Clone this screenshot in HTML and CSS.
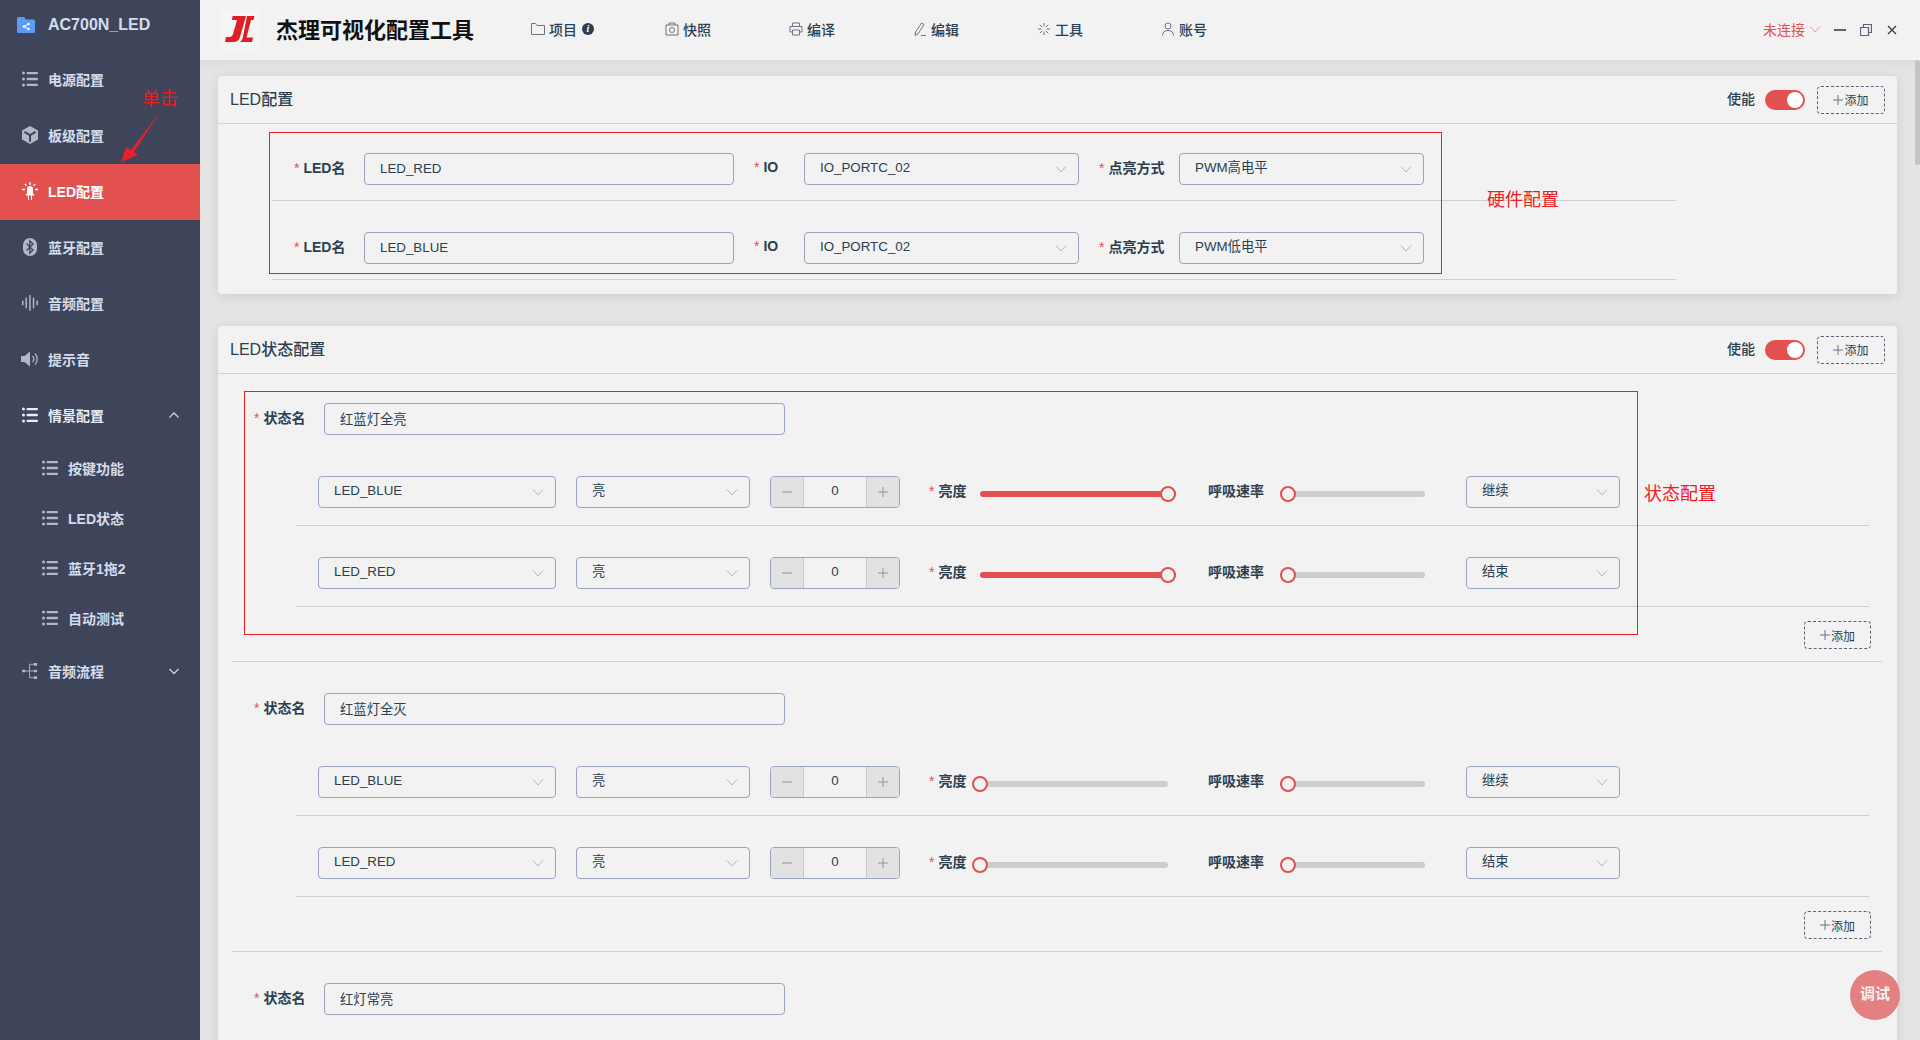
FILE: index.html
```html
<!DOCTYPE html>
<html>
<head>
  <meta charset="utf-8">
  <title>杰理可视化配置工具</title>
  <link rel="stylesheet" href="styles.css">
</head>
<body>
  <svg class="icon-defs" width="0" height="0">
    <symbol id="i-list" viewBox="0 0 16 16">
      <circle cx="1.500" cy="2" r="1.500"/><circle cx="1.500" cy="8" r="1.500"/><circle cx="1.500" cy="14" r="1.500"/>
      <rect x="4.500" y="0.900" width="11.500" height="2.400" rx="1"/><rect x="4.500" y="6.800" width="11.500" height="2.400" rx="1"/><rect x="4.500" y="12.700" width="11.500" height="2.400" rx="1"/>
    </symbol>
    <symbol id="i-down" viewBox="0 0 12 12">
      <path d="M1 3.500 6 9 11 3.500" fill="none" stroke="currentColor" stroke-width="1"/>
    </symbol>
    <symbol id="i-plus" viewBox="0 0 10 10">
      <path d="M0 5h10M5 0v10" stroke="currentColor" stroke-width="1"/>
    </symbol>
    <symbol id="i-minus" viewBox="0 0 10 10">
      <path d="M0 5h10" stroke="currentColor" stroke-width="1"/>
    </symbol>
  </svg>

  <div class="app">
    <aside class="sidebar">
      <div class="side-title">
        <svg class="folder" viewBox="0 0 18 16"><path d="M0 1.500A1.500 1.500 0 0 1 1.500 0H7l2 2.500h7.500A1.500 1.500 0 0 1 18 4v10.500A1.500 1.500 0 0 1 16.500 16h-15A1.500 1.500 0 0 1 0 14.500z" fill="#5a9cf8"/><g fill="#fff"><circle cx="11.500" cy="7" r="1.300"/><circle cx="7" cy="9.500" r="1.300"/><circle cx="11.500" cy="12" r="1.300"/></g><path d="M11.500 7 7 9.500l4.500 2.500" stroke="#fff" fill="none"/></svg>
        <span>AC700N_LED</span>
      </div>
      <div class="side-item"><svg class="side-icon"><use href="#i-list"/></svg>电源配置</div>
      <div class="side-item">
        <svg class="side-icon tall" viewBox="0 0 16 18"><path d="M8 0 16 4.500v9L8 18 0 13.500v-9zM8 8 3 5 2 6.800l5 2.900v6h2v-6l5-2.900L13 5z" fill-rule="evenodd"/></svg>板级配置
      </div>
      <div class="side-item active">
        <svg class="side-icon tall" viewBox="0 0 16 18"><path d="M5 7a3 3 0 0 1 6 0v5h1.200v1.500H10V18H9v-4.500H7V18H6v-4.500H3.800V12H5z"/><path d="M8 0v3M2.800 1.800l1.700 2M13.200 1.800l-1.700 2M0 7.500h3M13 7.500h3" stroke="#fff" stroke-width="1.300"/></svg>LED配置
      </div>
      <div class="side-item">
        <svg class="side-icon tall" viewBox="0 0 16 18"><rect x="1" width="14" height="18" rx="7"/><path d="M4.500 5.500 11 12l-3.200 3.200V2.800L11 6l-6.500 6.500" fill="none" stroke="#3e445a" stroke-width="1.300"/></svg>蓝牙配置
      </div>
      <div class="side-item">
        <svg class="side-icon" viewBox="0 0 16 16"><rect x="0" y="5.500" width="1.500" height="5" rx=".7"/><rect x="3.500" y="2.500" width="1.500" height="11" rx=".7"/><rect x="7.200" y="0" width="1.500" height="16" rx=".7"/><rect x="10.800" y="2.500" width="1.500" height="11" rx=".7"/><rect x="14.400" y="5.500" width="1.500" height="5" rx=".7"/></svg>音频配置
      </div>
      <div class="side-item">
        <svg class="side-icon wide" viewBox="0 0 18 16"><path d="M0 5h3.500L9 .5v15L3.500 11H0z"/><path d="M11.500 5a4 4 0 0 1 0 6M14 2.500a8 8 0 0 1 0 11" fill="none" stroke="currentColor" stroke-width="1.300"/></svg>提示音
      </div>
      <div class="side-item open">
        <svg class="side-icon"><use href="#i-list"/></svg>情景配置
        <svg class="side-arrow" viewBox="0 0 12 12"><path d="M1.500 8.500 6 4l4.500 4.500" fill="none" stroke="currentColor" stroke-width="1.300"/></svg>
      </div>
      <div class="side-sub"><svg class="side-icon"><use href="#i-list"/></svg>按键功能</div>
      <div class="side-sub"><svg class="side-icon"><use href="#i-list"/></svg>LED状态</div>
      <div class="side-sub"><svg class="side-icon"><use href="#i-list"/></svg>蓝牙1拖2</div>
      <div class="side-sub"><svg class="side-icon"><use href="#i-list"/></svg>自动测试</div>
      <div class="side-item">
        <svg class="side-icon wide" viewBox="0 0 18 18"><rect x="0" y="7.500" width="4" height="3" rx=".8"/><rect x="13" y="0" width="4" height="3" rx=".8"/><rect x="13" y="7.500" width="4" height="3" rx=".8"/><rect x="13" y="15" width="4" height="3" rx=".8"/><path d="M4 9h9M8.500 1.500V16.500M8.500 1.500H13M8.500 16.500H13" stroke="currentColor" fill="none"/></svg>音频流程
        <svg class="side-arrow" viewBox="0 0 12 12"><path d="M1.500 4 6 8.500 10.500 4" fill="none" stroke="currentColor" stroke-width="1.300"/></svg>
      </div>
    </aside>

    <div class="main">
      <header class="topbar">
        <div class="logo">
          <svg viewBox="0 0 40 40"><path d="M12.500 6H26L20 27c-1 3.300-3 5-7 5H5l1-5h3.500c2 0 3-1 3.500-3l4-14h-5z" fill="#df1f26"/><path d="M27 6h7.500l-1 4H31L26.500 27.500H33L32 32H19.500c2-1 2.800-2.500 3.300-4.500z" fill="#df1f26"/></svg>
        </div>
        <h1 class="app-title">杰理可视化配置工具</h1>
        <nav class="nav">
          <div class="nav-item first">
            <svg class="nav-icon" viewBox="0 0 14 14"><path d="M.5 12.500V1.500h4l1.500 2h7.500v9z"/></svg>项目
            <span class="info">i</span>
          </div>
          <div class="nav-item">
            <svg class="nav-icon" viewBox="0 0 14 14"><path d="M1 3h12v10H1zM4 3V1h6v2"/><circle cx="7" cy="8" r="2.500"/></svg>快照
          </div>
          <div class="nav-item">
            <svg class="nav-icon" viewBox="0 0 14 14"><path d="M3.500 4V1h7v3M3 10H1V4.500h12V10h-2M3.500 8h7v5h-7z"/></svg>编译
          </div>
          <div class="nav-item">
            <svg class="nav-icon" viewBox="0 0 14 14"><path d="M8.500 1 11 2.500 5 12 2 13.500 2.500 10zM8 13.500h5"/></svg>编辑
          </div>
          <div class="nav-item">
            <svg class="nav-icon" viewBox="0 0 14 14"><path d="M7 1v3.500M7 9.500V13M1 7h3.500M9.500 7H13M2.800 2.800l2.400 2.400M8.800 8.800l2.400 2.400M11.200 2.800 8.800 5.200M5.200 8.800l-2.400 2.400"/></svg>工具
          </div>
          <div class="nav-item">
            <svg class="nav-icon" viewBox="0 0 14 14"><circle cx="7" cy="4" r="3"/><path d="M1.500 13.500c0-3 2-5 5.500-5s5.500 2 5.500 5"/></svg>账号
          </div>
        </nav>
        <div class="status">未连接<svg class="chev"><use href="#i-down"/></svg></div>
        <div class="win-btns">
          <svg viewBox="0 0 12 12"><path d="M0 6h12" stroke="#5a6478" stroke-width="2"/></svg>
          <svg viewBox="0 0 12 12"><path d="M.5 3.500h8v8h-8zM3.500 3.500V.5h8v8h-3" fill="none" stroke="#5a6478" stroke-width="1.200"/></svg>
          <svg viewBox="0 0 12 12"><path d="M2 2l8 8M10 2l-8 8" stroke="#2c3e50" stroke-width="1.300"/></svg>
        </div>
      </header>

      <div class="content">
        <section class="card card-hw">
          <div class="card-head">
            <h2>LED配置</h2>
            <span class="enable">使能</span>
            <span class="toggle"></span>
            <span class="add-btn"><svg class="add-plus"><use href="#i-plus"/></svg>添加</span>
          </div>
          <div class="hw-row">
            <label class="lbl w-name"><i>*</i>LED名</label>
            <input class="field w-led" value="LED_RED" readonly>
            <label class="lbl w-io"><i>*</i>IO</label>
            <div class="field select w-port">IO_PORTC_02<svg class="chev"><use href="#i-down"/></svg></div>
            <label class="lbl w-mode"><i>*</i>点亮方式</label>
            <div class="field select w-pwm">PWM高电平<svg class="chev"><use href="#i-down"/></svg></div>
          </div>
          <div class="hw-row">
            <label class="lbl w-name"><i>*</i>LED名</label>
            <input class="field w-led" value="LED_BLUE" readonly>
            <label class="lbl w-io"><i>*</i>IO</label>
            <div class="field select w-port">IO_PORTC_02<svg class="chev"><use href="#i-down"/></svg></div>
            <label class="lbl w-mode"><i>*</i>点亮方式</label>
            <div class="field select w-pwm">PWM低电平<svg class="chev"><use href="#i-down"/></svg></div>
          </div>
        </section>

        <section class="card">
          <div class="card-head">
            <h2>LED状态配置</h2>
            <span class="enable">使能</span>
            <span class="toggle"></span>
            <span class="add-btn"><svg class="add-plus"><use href="#i-plus"/></svg>添加</span>
          </div>

          <div class="group">
            <div class="name-row">
              <label class="lbl w-state"><i>*</i>状态名</label>
              <input class="field w-state-input" value="红蓝灯全亮" readonly>
            </div>
            <div class="state-row">
              <div class="field select w-s1">LED_BLUE<svg class="chev"><use href="#i-down"/></svg></div>
              <div class="field select w-s2">亮<svg class="chev"><use href="#i-down"/></svg></div>
              <div class="number"><span class="num-btn"><svg><use href="#i-minus"/></svg></span><span class="num-val">0</span><span class="num-btn"><svg><use href="#i-plus"/></svg></span></div>
              <label class="lbl w-bright"><i>*</i>亮度</label>
              <div class="slider s-bright full"><span class="thumb"></span></div>
              <label class="lbl w-rate">呼吸速率</label>
              <div class="slider s-rate"><span class="thumb"></span></div>
              <div class="field select w-s3">继续<svg class="chev"><use href="#i-down"/></svg></div>
            </div>
            <div class="state-row">
              <div class="field select w-s1">LED_RED<svg class="chev"><use href="#i-down"/></svg></div>
              <div class="field select w-s2">亮<svg class="chev"><use href="#i-down"/></svg></div>
              <div class="number"><span class="num-btn"><svg><use href="#i-minus"/></svg></span><span class="num-val">0</span><span class="num-btn"><svg><use href="#i-plus"/></svg></span></div>
              <label class="lbl w-bright"><i>*</i>亮度</label>
              <div class="slider s-bright full"><span class="thumb"></span></div>
              <label class="lbl w-rate">呼吸速率</label>
              <div class="slider s-rate"><span class="thumb"></span></div>
              <div class="field select w-s3">结束<svg class="chev"><use href="#i-down"/></svg></div>
            </div>
            <div class="add-row"><span class="add-btn small"><svg class="add-plus"><use href="#i-plus"/></svg>添加</span></div>
          </div>

          <div class="group">
            <div class="name-row">
              <label class="lbl w-state"><i>*</i>状态名</label>
              <input class="field w-state-input" value="红蓝灯全灭" readonly>
            </div>
            <div class="state-row">
              <div class="field select w-s1">LED_BLUE<svg class="chev"><use href="#i-down"/></svg></div>
              <div class="field select w-s2">亮<svg class="chev"><use href="#i-down"/></svg></div>
              <div class="number"><span class="num-btn"><svg><use href="#i-minus"/></svg></span><span class="num-val">0</span><span class="num-btn"><svg><use href="#i-plus"/></svg></span></div>
              <label class="lbl w-bright"><i>*</i>亮度</label>
              <div class="slider s-bright"><span class="thumb"></span></div>
              <label class="lbl w-rate">呼吸速率</label>
              <div class="slider s-rate"><span class="thumb"></span></div>
              <div class="field select w-s3">继续<svg class="chev"><use href="#i-down"/></svg></div>
            </div>
            <div class="state-row">
              <div class="field select w-s1">LED_RED<svg class="chev"><use href="#i-down"/></svg></div>
              <div class="field select w-s2">亮<svg class="chev"><use href="#i-down"/></svg></div>
              <div class="number"><span class="num-btn"><svg><use href="#i-minus"/></svg></span><span class="num-val">0</span><span class="num-btn"><svg><use href="#i-plus"/></svg></span></div>
              <label class="lbl w-bright"><i>*</i>亮度</label>
              <div class="slider s-bright"><span class="thumb"></span></div>
              <label class="lbl w-rate">呼吸速率</label>
              <div class="slider s-rate"><span class="thumb"></span></div>
              <div class="field select w-s3">结束<svg class="chev"><use href="#i-down"/></svg></div>
            </div>
            <div class="add-row"><span class="add-btn small"><svg class="add-plus"><use href="#i-plus"/></svg>添加</span></div>
          </div>

          <div class="group group-last">
            <div class="name-row">
              <label class="lbl w-state"><i>*</i>状态名</label>
              <input class="field w-state-input" value="红灯常亮" readonly>
            </div>
          </div>
        </section>
      </div>

      <div class="scroll-thumb"></div>
      <div class="debug-btn">调试</div>
    </div>
  </div>

  <!-- annotations drawn over the screenshot -->
  <div class="note-box hw-box"></div>
  <div class="note-box state-box"></div>
  <div class="note-text hw-note">硬件配置</div>
  <div class="note-text state-note">状态配置</div>
  <div class="note-text click-note">单击</div>
  <svg class="note-arrow" viewBox="0 0 42 53"><path d="M40 2 11 40l-5-3-5 15 17-7-4-3z" fill="#e8202a"/></svg>
</body>
</html>
```

FILE: styles.css
```css
* {
  box-sizing: border-box;
}
html, body {
  margin: 0;
  height: 100%;
  overflow: hidden;
}
body {
  font-family: "Liberation Sans", "Noto Sans CJK SC", sans-serif;
  font-size: 14px;
  color: #2c3e50;
  background: #e4e4e4;
}
.icon-defs {
  position: absolute;
}
.app {
  display: flex;
  height: 1040px;
}

/* sidebar */
.sidebar {
  width: 200px;
  flex: none;
  background: #3e445a;
  color: #d5dcec;
  font-weight: 700;
}
.side-title {
  display: flex;
  align-items: center;
  height: 52px;
  padding: 0 0 2px 17px;
  font-size: 16px;
}
.folder {
  width: 18px;
  height: 16px;
  margin-right: 13px;
}
.side-item, .side-sub {
  display: flex;
  align-items: center;
  height: 56px;
  padding: 0 0 2px 22px;
}
.side-sub {
  height: 50px;
  padding-left: 42px;
}
.side-item.active {
  background: #e25050;
  color: #fff;
}
.side-item.open {
  color: #e8ecf5;
}
.side-icon {
  width: 16px;
  height: 16px;
  margin-right: 10px;
  fill: #b3b8c6;
  color: #b3b8c6;
}
.side-icon.tall {
  height: 18px;
}
.side-icon.wide {
  width: 18px;
  margin-left: -1px;
  margin-right: 9px;
}
.active .side-icon {
  fill: #fff;
  color: #fff;
}
.open .side-icon {
  fill: #e8ecf5;
}
.side-arrow {
  width: 12px;
  height: 12px;
  margin-left: auto;
  margin-right: 20px;
  color: #cfd4e0;
}

/* top bar */
.main {
  position: relative;
  flex: 1;
  min-width: 0;
  display: flex;
  flex-direction: column;
}
.topbar {
  position: relative;
  display: flex;
  align-items: center;
  height: 60px;
  flex: none;
  background: #f2f2f2;
  box-shadow: 0 2px 12px rgba(0, 0, 0, 0.06);
}
.logo {
  width: 40px;
  height: 40px;
  margin-left: 20px;
  border-radius: 6px;
  background: #f5f5f5;
}
.logo svg {
  display: block;
}
.app-title {
  margin: 0 0 4px 16px;
  width: 255px;
  font-size: 22px;
  font-weight: 700;
  color: #111;
}
.nav {
  display: flex;
  margin-bottom: 2px;
}
.nav-item {
  display: flex;
  align-items: center;
  width: 124px;
  font-weight: 500;
}
.nav-item.first {
  width: 134px;
}
.nav-icon {
  width: 14px;
  height: 14px;
  margin-right: 4px;
  fill: none;
  stroke: #5c6678;
  stroke-width: 0.9;
}
.info {
  width: 12px;
  height: 12px;
  margin-left: 5px;
  border-radius: 50%;
  background: #2c3e50;
  color: #fff;
  font: italic 700 10px/12px "Liberation Serif", serif;
  text-align: center;
}
.status {
  display: flex;
  align-items: center;
  margin: 0 0 2px auto;
  color: #e25050;
}
.status .chev {
  margin-left: 4px;
  color: #e8a0a0;
}
.win-btns {
  display: flex;
  gap: 14px;
  margin: 0 22px 0 13px;
}
.win-btns svg {
  width: 12px;
  height: 12px;
}

/* content */
.content {
  flex: 1;
  min-height: 0;
  overflow: hidden;
  padding: 16px 23px 0 18px;
}
.card {
  margin-bottom: 32px;
  border-radius: 4px;
  background: #f2f2f2;
  box-shadow: 0 2px 12px rgba(0, 0, 0, 0.1);
}
.card-hw {
  padding-bottom: 14px;
}
.card-head {
  display: flex;
  align-items: center;
  height: 48px;
  padding: 0 12px;
  border-bottom: 1px solid #cfcfcf;
}
.card-head h2 {
  margin: 0 auto 4px 0;
  font-size: 16px;
  font-weight: 500;
}
.enable {
  margin: 0 10px 3px 0;
  font-weight: 500;
}
.toggle {
  position: relative;
  width: 40px;
  height: 20px;
  margin-right: 12px;
  border-radius: 10px;
  background: #e25050;
}
.toggle::after {
  content: "";
  position: absolute;
  right: 2px;
  top: 2px;
  width: 16px;
  height: 16px;
  border-radius: 50%;
  background: #fff;
}
.add-btn {
  display: flex;
  align-items: center;
  justify-content: center;
  width: 68px;
  height: 28px;
  border: 1px dashed #5a6478;
  border-radius: 4px;
  font-size: 12px;
}
.add-btn.small {
  display: inline-flex;
  width: 67px;
}
.add-plus {
  width: 10px;
  height: 10px;
  margin-right: 1px;
  color: #6a7383;
}

/* form parts */
.lbl {
  flex: none;
  margin-bottom: 4px;
  font-weight: 700;
}
.lbl i {
  margin-right: 4px;
  font-style: normal;
  font-weight: 400;
  color: #e25050;
}
.field {
  display: block;
  flex: none;
  height: 32px;
  padding: 0 15px;
  border: 1px solid #9aa3c0;
  border-radius: 4px;
  background: transparent;
  font-family: inherit;
  font-size: 13.333px;
  color: inherit;
  outline: none;
}
input.field {
  padding-bottom: 2px;
}
.select {
  position: relative;
  line-height: 28px;
}
.select .chev {
  position: absolute;
  right: 11px;
  top: 9px;
  color: #b0b5c9;
}
.chev {
  width: 12px;
  height: 12px;
}

/* hardware rows */
.hw-row {
  display: flex;
  align-items: center;
  width: 1404px;
  margin-left: 54px;
  padding: 31px 0 15px 22px;
  border-bottom: 1px solid #cfcfcf;
}
.card-head + .hw-row {
  padding-top: 29px;
}
.w-name { width: 70px; }
.w-led { width: 370px; margin-right: 20px; }
.w-io { width: 50px; }
.w-port { width: 275px; margin-right: 20px; }
.w-mode { width: 80px; }
.w-pwm { width: 245px; }

/* state groups */
.group {
  margin: 0 15px 0 14px;
  border-bottom: 1px solid #cfcfcf;
  padding-top: 31px;
}
.card-head + .group {
  padding-top: 29px;
}
.group-last {
  padding-bottom: 100px;
}
.name-row {
  display: flex;
  align-items: center;
  margin: 0 0 10px 22px;
}
.w-state { width: 70px; }
.w-state-input { width: 461px; }
.state-row {
  display: flex;
  align-items: center;
  margin: 0 13px 0 64px;
  padding: 31px 0 17px 22px;
  border-bottom: 1px solid #cfcfcf;
}
.w-s1 { width: 238px; margin-right: 20px; }
.w-s2 { width: 174px; margin-right: 20px; }
.number {
  display: flex;
  flex: none;
  width: 130px;
  height: 32px;
  margin-right: 29px;
  border: 1px solid #9aa3c0;
  border-radius: 4px;
  overflow: hidden;
}
.num-btn {
  display: flex;
  align-items: center;
  justify-content: center;
  width: 32px;
  flex: none;
  background: #e2e2e2;
  color: #8a93a6;
}
.num-btn svg {
  width: 10px;
  height: 10px;
}
.num-val {
  flex: 1;
  border-left: 1px solid #c8c8c8;
  border-right: 1px solid #c8c8c8;
  font-size: 13.333px;
  line-height: 28px;
  text-align: center;
}
.w-bright { width: 51px; }
.w-rate { width: 72px; }
.slider {
  position: relative;
  flex: none;
  height: 6px;
  margin-top: 4px;
  border-radius: 3px;
  background: #cdcdcd;
}
.s-bright { width: 188px; margin-right: 40px; }
.s-rate { width: 145px; margin-right: 41px; }
.w-s3 { width: 154px; }
.slider.full {
  width: 196px;
  margin-right: 32px;
  background: #e25050;
}
.thumb {
  position: absolute;
  left: 0;
  top: -5px;
  width: 16px;
  height: 16px;
  border: 2px solid #e25050;
  border-radius: 50%;
  background: #f2f2f2;
}
.s-bright .thumb {
  left: -8px;
}
.full .thumb {
  left: auto;
  right: 0;
}
.add-row {
  display: flex;
  justify-content: flex-end;
  padding: 14px 11px 12px 0;
}
.scroll-thumb {
  position: absolute;
  right: 0;
  top: 60px;
  width: 5px;
  height: 105px;
  border-radius: 3px;
  background: #c4c4c4;
}
.debug-btn {
  position: absolute;
  left: 1650px;
  top: 970px;
  width: 50px;
  height: 50px;
  border-radius: 50%;
  background: #e58080;
  color: #f2f2f2;
  font-size: 15px;
  font-weight: 700;
  line-height: 48px;
  text-align: center;
}

/* annotations */
.note-box {
  position: absolute;
  border: 1px solid #ee1c25;
}
.hw-box {
  left: 269px;
  top: 132px;
  width: 1173px;
  height: 142px;
}
.state-box {
  left: 244px;
  top: 391px;
  width: 1394px;
  height: 244px;
}
.note-text {
  position: absolute;
  font-size: 18px;
  line-height: 24px;
  color: #ee1c25;
}
.hw-note { left: 1487px; top: 188px; }
.state-note { left: 1644px; top: 482px; }
.click-note { left: 142px; top: 87px; }
.note-arrow {
  position: absolute;
  left: 120px;
  top: 110px;
  width: 42px;
  height: 53px;
}
```
